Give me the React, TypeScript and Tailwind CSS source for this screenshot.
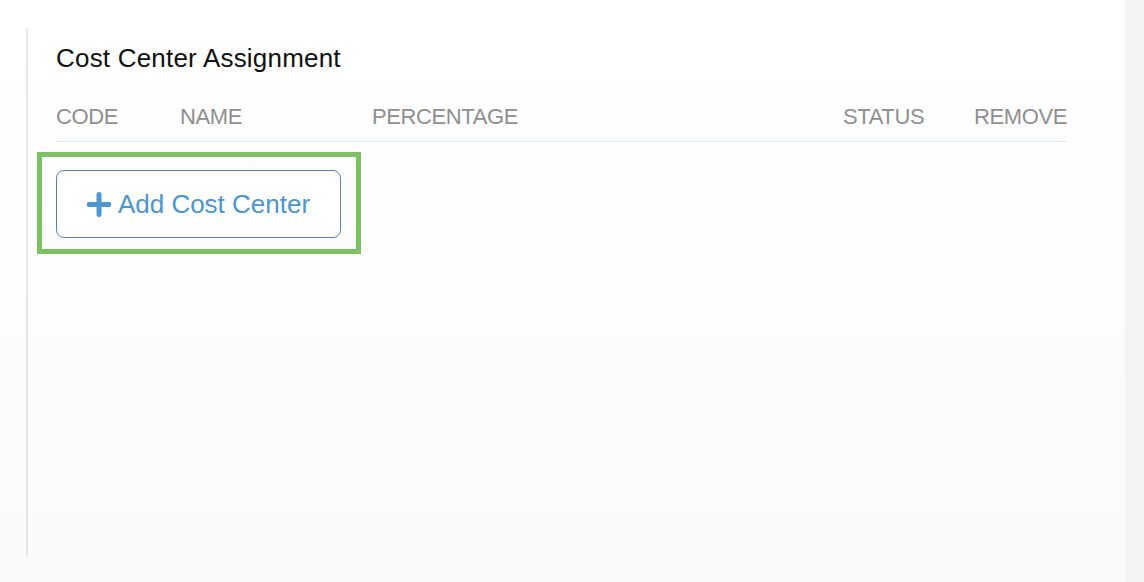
const columns = [
  { label: "CODE", className: "w-[124px]" },
  { label: "NAME", className: "w-[192px]" },
  { label: "PERCENTAGE", className: "flex-1" },
  { label: "STATUS", className: "w-[131px]" },
  { label: "REMOVE", className: "text-right" },
]

const PlusIcon = () => (
  <svg width="24" height="25" viewBox="0 0 24 25" aria-hidden="true">
    <path d="M12 2.5v20M2 12.5h20" stroke="#4d97d0" strokeWidth="5" strokeLinecap="round" />
  </svg>
)

const App = () => {
  return (
    <div
      className="flex h-[582px] w-[1144px] overflow-hidden bg-gradient-to-b from-[#ffffff] to-[#fafafa]"
      style={{ fontFamily: '"Liberation Sans", Arial, sans-serif' }}
    >
      {/* Main area */}
      <div className="flex-1 pl-[26px] pt-[28px]">
        <div className="h-[529px] border-l-2 border-[#e6e6e6] pl-[28px] pr-[58px] pt-[15px]">
          {/* Title */}
          <h2 className="text-[26px] leading-[30px] text-[#111111] tracking-[0.2px]">Cost Center Assignment</h2>

          {/* Table header */}
          <div className="mt-[31px] flex border-b-[1.5px] border-[#dfeaf8] pb-[11px] text-[22px] leading-[26px] tracking-[-0.4px] text-[#8f8f8f]">
            {columns.map((col) => (
              <div key={col.label} className={col.className}>
                {col.label}
              </div>
            ))}
          </div>

          {/* Add button with highlight */}
          <div className="-ml-[19px] mt-[10px] w-[324px] border-[5px] border-[#7cc262] pb-[11px] pl-[14px] pr-[15px] pt-[13px]">
            <button className="flex h-[68px] w-[285px] items-center justify-center gap-[7px] rounded-lg border-[1.5px] border-[#5a80b6] bg-white text-[26px] text-[#4a96d0]">
              <PlusIcon />
              <span>Add Cost Center</span>
            </button>
          </div>
        </div>
      </div>

      {/* Right strip */}
      <div className="w-[19px] bg-[#f4f4f5]" />
    </div>
  )
}

export default App
